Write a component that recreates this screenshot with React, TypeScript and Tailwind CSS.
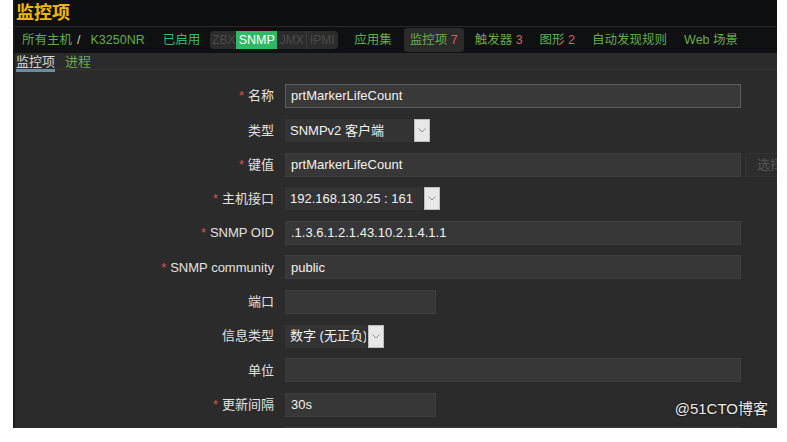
import React from "react";

const font = { fontFamily: '"Liberation Sans", "Noto Sans CJK SC", sans-serif' };

function Chevron() {
  return (
    <div className="flex h-full w-[16px] shrink-0 items-center justify-center border border-[#bdbdbd] bg-[#e8e8e8]">
      <svg width="8" height="5" viewBox="0 0 8 5">
        <path d="M0.5 0.5 L4 4 L7.5 0.5" fill="none" stroke="#8a8a8a" strokeWidth="1" />
      </svg>
    </div>
  );
}

function Row({
  label,
  req,
  children,
}: {
  label: string;
  req?: boolean;
  children: React.ReactNode;
}) {
  return (
    <div className="flex h-[24px] items-center">
      <div className="w-[260px] shrink-0 whitespace-nowrap pr-[1px] text-right text-[13px] text-[#e2e2e2]">
        {req && <span className="mr-[4px] text-[#d9534f]">*</span>}
        {label}
      </div>
      <div className="ml-[10px] flex h-full items-center">{children}</div>
    </div>
  );
}

function Input({ w, value, focus }: { w: string; value?: string; focus?: boolean }) {
  return (
    <div
      className={`flex h-full shrink-0 items-center whitespace-nowrap border pl-[5px] text-[13px] text-[#f2f2f2] ${w} ${
        focus ? "border-[#556168] bg-[#393939]" : "border-[#3e3e3e] bg-[#373737]"
      }`}
    >
      {value}
    </div>
  );
}

function Select({ w, value }: { w: string; value: string }) {
  return (
    <div className="flex h-[23px] items-center gap-[1px]">
      <div
        className={`flex h-full shrink-0 items-center overflow-hidden whitespace-nowrap border border-[#333] bg-[#333333] pl-[4px] text-[13px] text-[#f2f2f2] ${w}`}
      >
        {value}
      </div>
      <Chevron />
    </div>
  );
}

export default function App() {
  return (
    <div className="h-[442px] w-[787px] overflow-hidden bg-white" style={font}>
      <div className="relative ml-[13px] h-[428px] w-[764px] overflow-hidden border-l-2 border-[#191919] bg-[#2b2b2b]">
        {/* title */}
        <div className="flex h-[27px] items-center border-b border-[#2a2a2a] bg-[#0e0f11] pl-[1px]">
          <span className="text-[18px] font-bold text-[#f2b705]">监控项</span>
        </div>

        {/* host nav */}
        <div className="flex h-[26px] items-center whitespace-nowrap bg-[#0f1012] pl-[7px] text-[12.5px] text-[#67ab4f]">
          <span className="shrink-0">所有主机</span>
          <span className="ml-[5px] mr-[10px] shrink-0 text-[#cfcfcf]">/</span>
          <span className="shrink-0">K3250NR</span>
          <span className="ml-[18px] shrink-0 text-[#3dbb6a]">已启用</span>
          <div className="ml-[10px] flex h-[18px] shrink-0 items-center rounded-sm bg-[#2c2c2c] px-[1px] text-[12px] text-[#4b4b4b]">
            <span className="w-[25px] text-center">ZBX</span>
            <span className="w-[41px] bg-[#2fb866] text-center text-[12.5px] text-white">SNMP</span>
            <span className="w-[30px] border-r border-[#3a3a3a] text-center">JMX</span>
            <span className="w-[30px] text-center">IPMI</span>
          </div>
          <span className="ml-[16px] shrink-0">应用集</span>
          <span className="ml-[12px] shrink-0 rounded-sm bg-[#2b2b2b] px-[6px] py-[3px]">
            监控项 <span className="text-[#d06464]">7</span>
          </span>
          <span className="ml-[11px] shrink-0">
            触发器 <span className="text-[#d06464]">3</span>
          </span>
          <span className="ml-[17px] shrink-0">
            图形 <span className="text-[#d06464]">2</span>
          </span>
          <span className="ml-[17px] shrink-0">自动发现规则</span>
          <span className="ml-[17px] shrink-0">Web 场景</span>
        </div>

        {/* sub tabs */}
        <div className="flex h-[17px] items-start border-b border-[#333] bg-[#2b2b2b] pl-[1px] pt-[1px] text-[13px] leading-[15px]">
          <span className="border-b-[3px] border-[#6a8da3] text-[#d8d8d8]">监控项</span>
          <span className="ml-[10px] text-[#67ab4f]">进程</span>
        </div>

        {/* form */}
        <div className="flex flex-col gap-[10.3px] pt-[14px]">
          <Row label="名称" req>
            <Input w="w-[456px]" value="prtMarkerLifeCount" focus />
          </Row>
          <Row label="类型">
            <Select w="w-[128px]" value="SNMPv2 客户端" />
          </Row>
          <Row label="键值" req>
            <Input w="w-[456px]" value="prtMarkerLifeCount" />
            <div className="ml-[4px] flex h-full w-[50px] shrink-0 items-center whitespace-nowrap border border-[#333] bg-[#2d2d2d] pl-[11px] text-[13px] text-[#555]">
              选择
            </div>
          </Row>
          <Row label="主机接口" req>
            <Select w="w-[138px]" value="192.168.130.25 : 161" />
          </Row>
          <Row label="SNMP OID" req>
            <Input w="w-[456px]" value=".1.3.6.1.2.1.43.10.2.1.4.1.1" />
          </Row>
          <Row label="SNMP community" req>
            <Input w="w-[456px]" value="public" />
          </Row>
          <Row label="端口">
            <Input w="w-[151px]" />
          </Row>
          <Row label="信息类型">
            <Select w="w-[82px]" value="数字 (无正负)" />
          </Row>
          <Row label="单位">
            <Input w="w-[456px]" />
          </Row>
          <Row label="更新间隔" req>
            <Input w="w-[151px]" value="30s" />
          </Row>
          <Row label="">
            <Input w="w-[456px]" />
          </Row>
        </div>

        <div className="absolute bottom-[8px] right-[9px] whitespace-nowrap text-[15px] text-[#ececec] [text-shadow:0_0_2px_#000]">
          @51CTO博客
        </div>
      </div>
    </div>
  );
}
